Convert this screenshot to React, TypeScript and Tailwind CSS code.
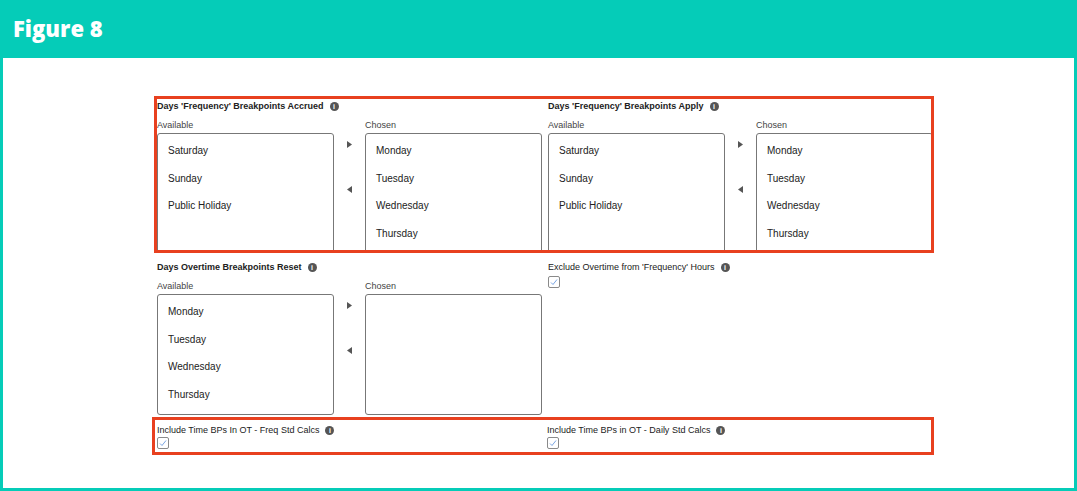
import React from "react";

const Info = () => (
  <span className="inline-flex items-center justify-center w-[9px] h-[9px] rounded-full bg-[#555] text-white text-[7px] font-bold leading-none ml-[6px]">i</span>
);

const Check = () => (
  <div className="w-[12px] h-[12px] border border-[#8a8a8a] rounded-[2px] bg-white flex items-center justify-center">
    <svg width="8" height="8" viewBox="0 0 8 8"><path d="M1 4.5 L3 6.5 L7 1.5" stroke="#6b9be0" strokeWidth="0.9" fill="none" /></svg>
  </div>
);

const ListBox = ({ items, h }: { items: string[]; h: string }) => (
  <div className={`w-[177px] ${h} border border-[#777] rounded-[3px] bg-white pt-[10px] pl-[10px] flex flex-col gap-[13.5px] shrink-0`}>
    {items.map((t) => (
      <div key={t} className="text-[10px] leading-[14px] text-[#222]">{t}</div>
    ))}
  </div>
);

const Arrows = () => (
  <div className="w-[31px] flex flex-col items-center pt-[8px] gap-[38px] shrink-0">
    <svg width="5" height="7" viewBox="0 0 5 7"><path d="M0 0 L5 3.5 L0 7Z" fill="#555" /></svg>
    <svg width="5" height="7" viewBox="0 0 5 7"><path d="M5 0 L0 3.5 L5 7Z" fill="#555" /></svg>
  </div>
);

const DualList = ({ title, bold, avail, chosen, h }: { title: string; bold?: boolean; avail: string[]; chosen: string[]; h: string }) => (
  <div className="flex flex-col">
    <div className={`text-[9px] leading-[12px] text-[#222] flex items-center ${bold ? "font-bold" : ""}`}>{title}<Info /></div>
    <div className="flex mt-[7px] text-[9px] leading-[12px] text-[#444]">
      <div className="w-[208px]">Available</div>
      <div>Chosen</div>
    </div>
    <div className="flex mt-[2px]">
      <ListBox items={avail} h={h} />
      <Arrows />
      <ListBox items={chosen} h={h} />
    </div>
  </div>
);

const days4 = ["Monday", "Tuesday", "Wednesday", "Thursday"];
const weekend = ["Saturday", "Sunday", "Public Holiday"];

export default function App() {
  return (
    <div className="w-[1077px] h-[491px] bg-[#05ccb8] flex flex-col" style={{ fontFamily: "'Liberation Sans', Arial, sans-serif" }}>
      <div className="h-[58px] flex items-center pl-[13px] pb-[2px]">
        <span className="text-white text-[22px] font-black" style={{ fontFamily: "'Open Sans', sans-serif" }}>Figure 8</span>
      </div>
      <div className="flex-1 mx-[3px] mb-[3px] bg-white pl-[148px] pt-[38px]">
        <div className="ml-[3px] w-[780px] h-[157px] border-[3px] border-[#e8401f] overflow-hidden pt-[1px] flex gap-[6px]">
          <DualList title="Days 'Frequency' Breakpoints Accrued" bold avail={weekend} chosen={days4} h="h-[140px]" />
          <DualList title="Days 'Frequency' Breakpoints Apply" bold avail={weekend} chosen={days4} h="h-[140px]" />
        </div>
        <div className="flex gap-[6px] pl-[6px] pt-[8px]">
          <DualList title="Days Overtime Breakpoints Reset" bold avail={days4} chosen={[]} h="h-[121px]" />
          <div className="flex flex-col">
            <div className="text-[9px] leading-[12px] text-[#222] flex items-center">Exclude Overtime from 'Frequency' Hours<Info /></div>
            <div className="mt-[3px]"><Check /></div>
          </div>
        </div>
        <div className="w-[782px] h-[38px] border-[3px] border-[#e8401f] mt-[2px] ml-[1px] flex pl-[2px] pt-[4px]">
          <div className="w-[390px] flex flex-col">
            <div className="text-[9px] leading-[12px] text-[#222] flex items-center">Include Time BPs In OT - Freq Std Calcs<Info /></div>
            <div className="mt-[1px]"><Check /></div>
          </div>
          <div className="flex flex-col">
            <div className="text-[9px] leading-[12px] text-[#222] flex items-center">Include Time BPs in OT - Daily Std Calcs<Info /></div>
            <div className="mt-[1px]"><Check /></div>
          </div>
        </div>
      </div>
    </div>
  );
}
